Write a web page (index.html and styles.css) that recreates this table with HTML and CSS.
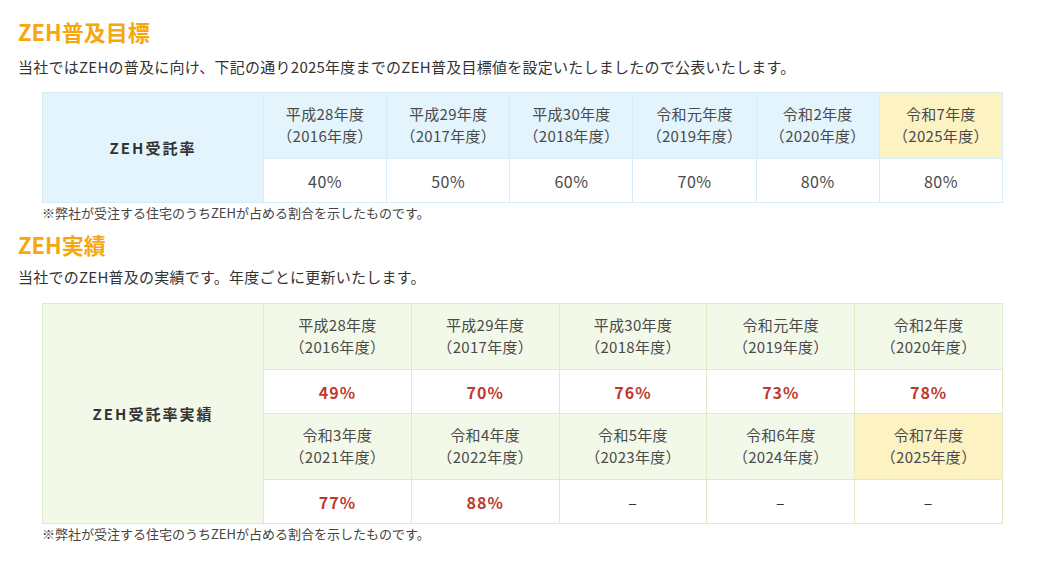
FILE: index.html
```html
<!DOCTYPE html>
<html lang="ja">
<head>
<meta charset="utf-8">
<link rel="stylesheet" href="styles.css">
</head>
<body>
<div class="page">
  <h2 class="title t1">ZEH普及目標</h2>
  <p class="lead l1">当社ではZEHの普及に向け、下記の通り2025年度までのZEH普及目標値を設定いたしましたので公表いたします。</p>
  <table class="tbl blue">
    <colgroup><col class="c-head"><col><col><col><col><col><col></colgroup>
    <tr class="hrow">
      <th rowspan="2" class="label">ZEH受託率</th>
      <td class="yr">平成28年度<br>（2016年度）</td>
      <td class="yr">平成29年度<br>（2017年度）</td>
      <td class="yr">平成30年度<br>（2018年度）</td>
      <td class="yr">令和元年度<br>（2019年度）</td>
      <td class="yr">令和2年度<br>（2020年度）</td>
      <td class="yr hl">令和7年度<br>（2025年度）</td>
    </tr>
    <tr class="drow">
      <td>40%</td><td>50%</td><td>60%</td><td>70%</td><td>80%</td><td>80%</td>
    </tr>
  </table>
  <p class="note">※弊社が受注する住宅のうちZEHが占める割合を示したものです。</p>

  <h2 class="title t2">ZEH実績</h2>
  <p class="lead l2">当社でのZEH普及の実績です。年度ごとに更新いたします。</p>
  <table class="tbl green">
    <colgroup><col class="c-head"><col><col><col><col><col></colgroup>
    <tr class="hrow">
      <th rowspan="4" class="label">ZEH受託率実績</th>
      <td class="yr">平成28年度<br>（2016年度）</td>
      <td class="yr">平成29年度<br>（2017年度）</td>
      <td class="yr">平成30年度<br>（2018年度）</td>
      <td class="yr">令和元年度<br>（2019年度）</td>
      <td class="yr">令和2年度<br>（2020年度）</td>
    </tr>
    <tr class="drow red">
      <td>49%</td><td>70%</td><td>76%</td><td>73%</td><td>78%</td>
    </tr>
    <tr class="hrow">
      <td class="yr">令和3年度<br>（2021年度）</td>
      <td class="yr">令和4年度<br>（2022年度）</td>
      <td class="yr">令和5年度<br>（2023年度）</td>
      <td class="yr">令和6年度<br>（2024年度）</td>
      <td class="yr hl">令和7年度<br>（2025年度）</td>
    </tr>
    <tr class="drow red">
      <td>77%</td><td>88%</td><td class="dash">–</td><td class="dash">–</td><td class="dash">–</td>
    </tr>
  </table>
  <p class="note">※弊社が受注する住宅のうちZEHが占める割合を示したものです。</p>
</div>
</body>
</html>
```

FILE: styles.css
```css
html, body {
  margin: 0;
  padding: 0;
  background: #fff;
}
body {
  font-family: "Noto Sans CJK JP", "Noto Sans", sans-serif;
  color: #333;
}
.page {
  padding: 16px 0 0 18px;
  width: 986px;
}
.title {
  margin: 0;
  font-size: 22px;
  line-height: 30px;
  font-weight: 700;
  color: #f6a70c;
}
.lead {
  font-size: 15px;
  line-height: 22px;
  letter-spacing: 0.25px;
  color: #333;
}
.l1 { margin: 10px 0 14px; }
.l2 { margin: 7px 0 15px; }
.tbl {
  margin-left: 24px;
  width: 961px;
  border-collapse: collapse;
  table-layout: fixed;
  font-size: 15px;
  color: #4a4a4a;
}
.c-head { width: 221px; }
.tbl td, .tbl th {
  text-align: center;
  vertical-align: middle;
  padding: 0;
}
.hrow td { height: 63px; line-height: 22px; letter-spacing: 0.3px; padding-bottom: 2px; }
.drow td { height: 43px; line-height: 20px; font-size: 16px; letter-spacing: 0.5px; }
.label {
  font-size: 15px;
  font-weight: 700;
  letter-spacing: 2px;
  color: #333;
}
.blue td, .blue th { border: 1px solid #d6ebf5; }
.blue .label, .blue .yr { background: #e3f4fc; }
.green td, .green th { border: 1px solid #dcedc6; }
.green .label, .green .yr { background: #f3f9e9; }
.tbl .yr.hl { background: #fdf2c2; }
.red td {
  color: #c0392b;
  font-weight: 700;
  letter-spacing: 1px;
}
.red td.dash { color: #333; font-weight: 400; }
.note {
  margin: 0 0 0 24px;
  font-size: 13px;
  line-height: 20px;
  color: #444;
}
.t2 { margin-top: 6px; }
```
